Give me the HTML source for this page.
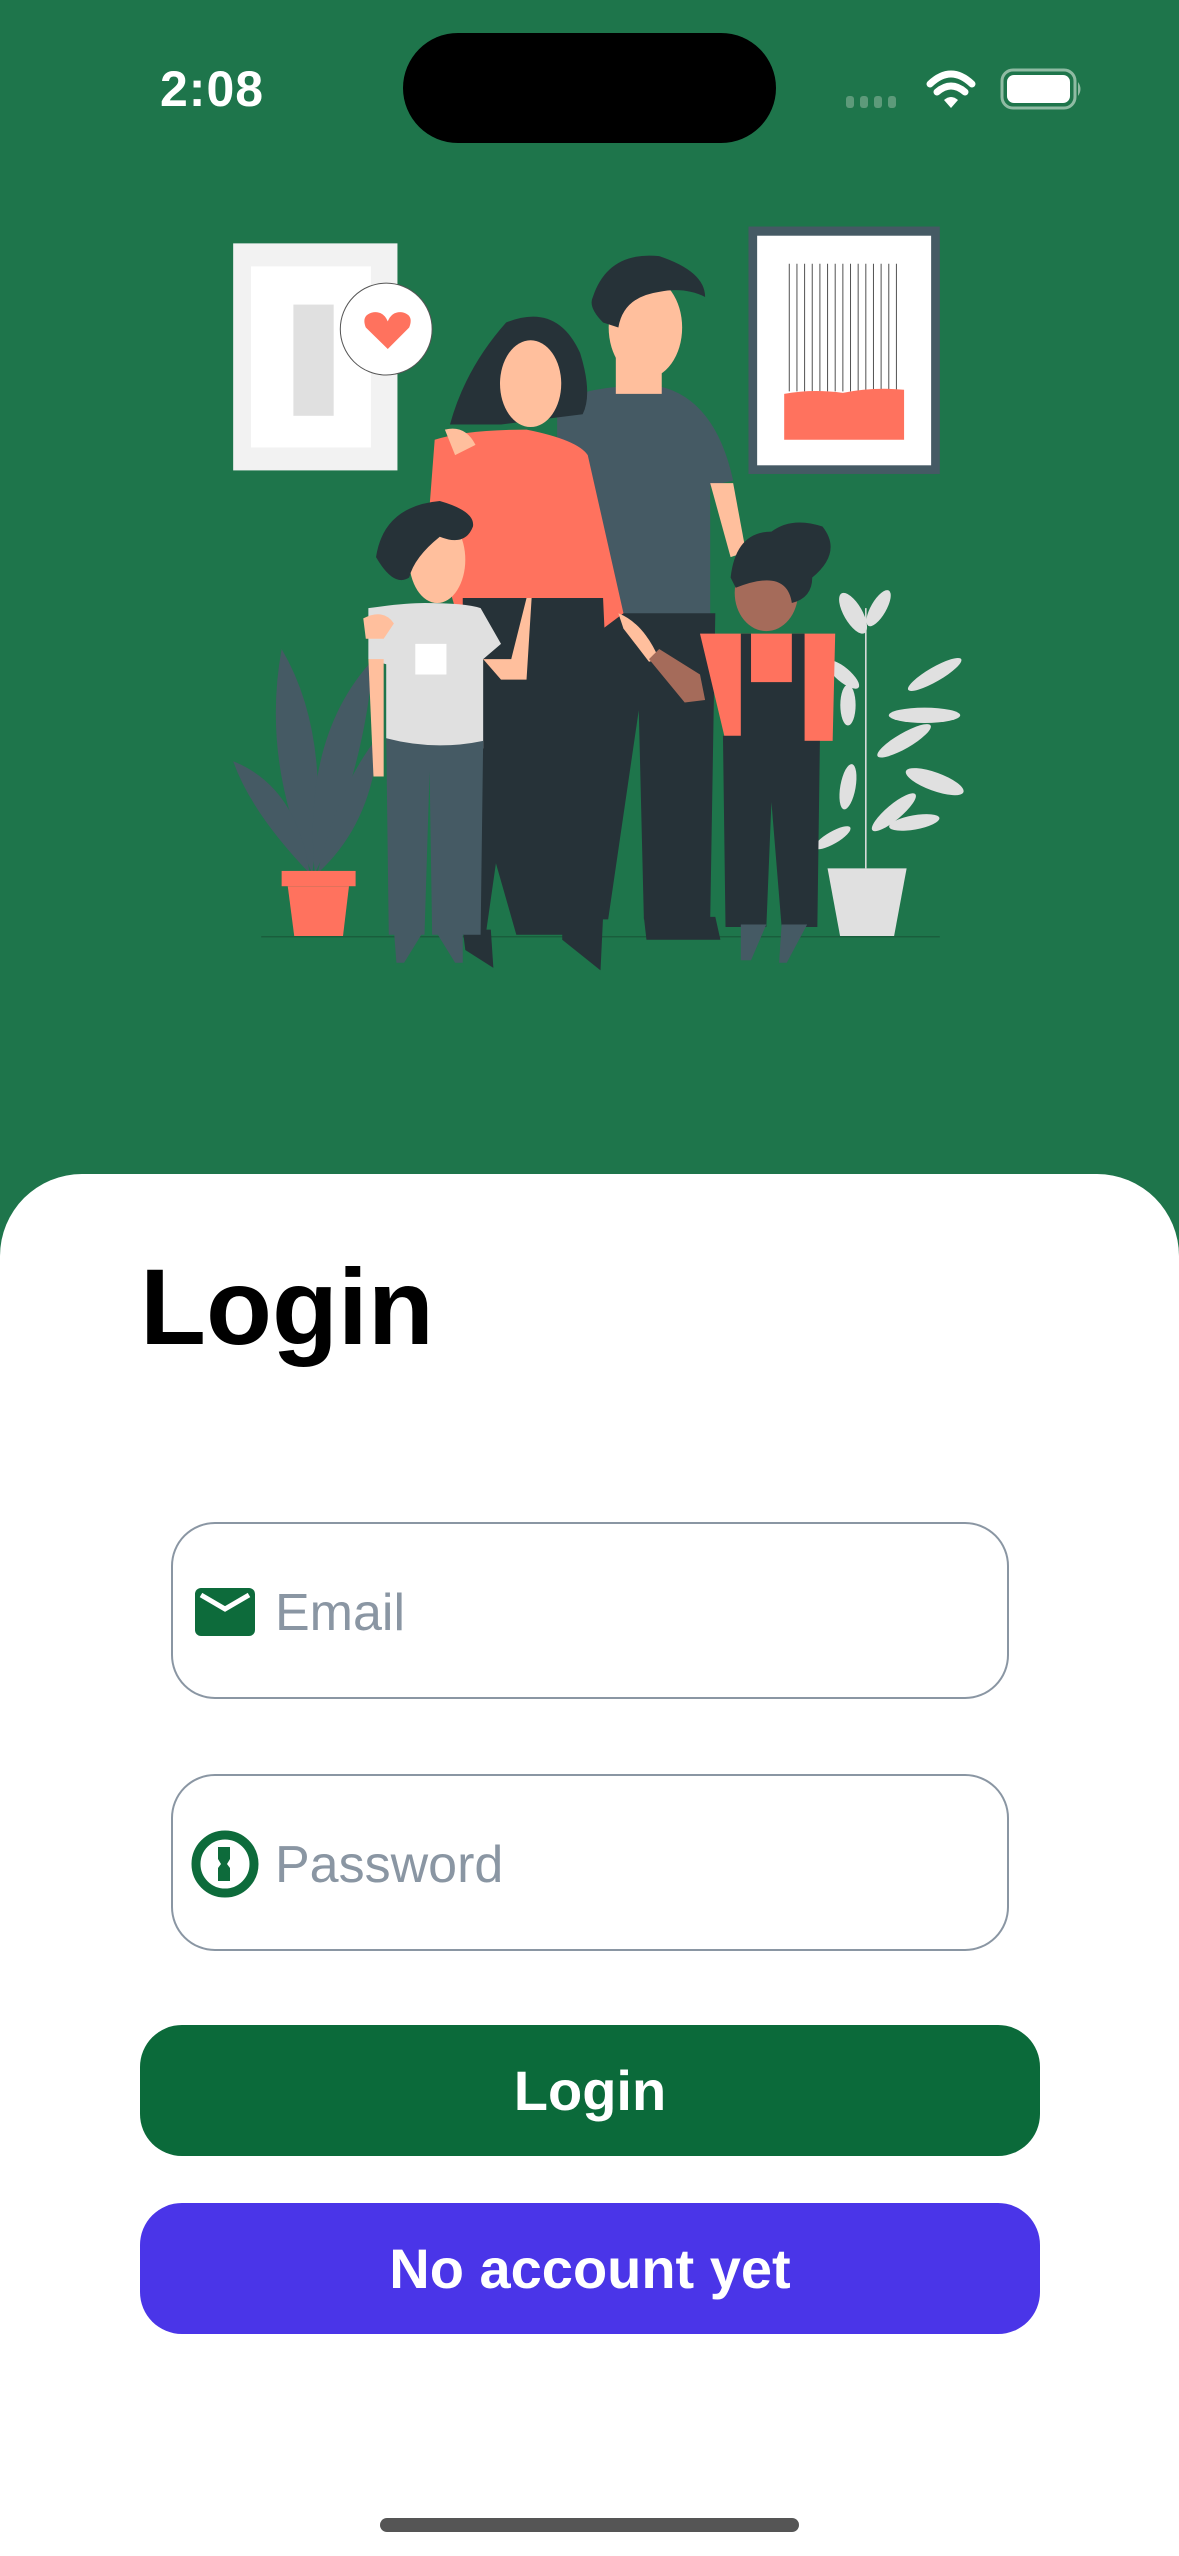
<!DOCTYPE html>
<html><head><meta charset="utf-8">
<style>
*{margin:0;padding:0;box-sizing:border-box}
html,body{width:1179px;height:2556px;overflow:hidden;background:#fff;font-family:"Liberation Sans",sans-serif}
.top{position:absolute;left:0;top:0;width:1179px;height:1260px;background:#1e754b}
.island{position:absolute;left:403px;top:33px;width:373px;height:110px;background:#000;border-radius:55px}
.time{position:absolute;left:160px;top:60px;font-size:50px;font-weight:bold;color:#fff;letter-spacing:1px}
.card{position:absolute;left:0;top:1174px;width:1179px;height:1382px;background:#fff;border-radius:82px 82px 0 0}
.title{position:absolute;left:140px;top:1242px;font-size:108px;font-weight:bold;color:#000;line-height:1.2}
.field{position:absolute;left:171px;width:838px;height:177px;border:2.5px solid #8a96a3;border-radius:44px}
.ph{position:absolute;left:102px;top:58px;font-size:52px;color:#8a96a3;line-height:1.2}
.btn{position:absolute;left:140px;width:900px;height:131px;border-radius:42px;color:#fff;font-weight:bold;font-size:56px;text-align:center;line-height:131px}
.home{position:absolute;left:380px;top:2518px;width:419px;height:14px;border-radius:7px;background:#555}
</style></head><body>
<div class="top"></div>
<div class="time">2:08</div>
<div class="island"></div>
<svg style="position:absolute;left:840px;top:60px" width="250" height="60" viewBox="0 0 250 60">
<g fill="#5d9a7a"><rect x="6" y="36" width="8" height="12" rx="3"/><rect x="20" y="36" width="8" height="12" rx="3"/><rect x="34" y="36" width="8" height="12" rx="3"/><rect x="48" y="36" width="8" height="12" rx="3"/></g>
<g fill="none" stroke="#fff" stroke-width="7" stroke-linecap="round"><path d="M90 24 Q111 4 132 24"/><path d="M97 32 Q111 20 125 32"/></g>
<path d="M104 40 L111 48 L118 40 Q111 34 104 40Z" fill="#fff"/>
<rect x="162" y="10" width="73" height="38" rx="11" fill="none" stroke="#8fbba3" stroke-width="3"/>
<rect x="167" y="15" width="63" height="28" rx="7" fill="#fff"/>
<path d="M238 22 Q243 29 238 36Z" fill="#8fbba3"/>
</svg>
<svg style="position:absolute;left:200px;top:200px" width="800" height="800" viewBox="0 0 1568 1568">
<!-- left frame -->
<rect x="65" y="85" width="322" height="445" fill="#f2f2f2"/>
<rect x="100" y="130" width="235" height="355" fill="#fff"/>
<rect x="183" y="205" width="79" height="218" fill="#e0e0e0"/>
<circle cx="365" cy="253" r="90" fill="#fff" stroke="#555" stroke-width="2"/>
<path d="M368 292 L325 250 Q315 225 340 220 Q360 218 368 238 Q376 218 396 220 Q420 225 410 250Z" fill="#ff725e"/>
<!-- right frame -->
<rect x="1075" y="52" width="375" height="485" fill="#455a64"/>
<rect x="1092" y="70" width="341" height="450" fill="#fff"/>
<g stroke="#555" stroke-width="2">
<path d="M1155 125V375M1170 125V375M1185 125V375M1200 125V375M1215 125V375M1230 125V375M1245 125V375M1260 125V375M1275 125V375M1290 125V375M1305 125V375M1320 125V375M1335 125V375M1350 125V375M1365 125V375"/></g>
<path d="M1145 380 Q1200 370 1260 378 Q1320 366 1380 372 V470 H1145Z" fill="#ff725e"/>
<!-- left plant -->
<g fill="#455a64">
<path d="M220 1320 Q120 1100 160 880 Q260 1050 220 1320Z"/>
<path d="M225 1320 Q200 1050 340 900 Q320 1130 225 1320Z"/>
<path d="M215 1320 Q100 1200 65 1100 Q190 1150 215 1320Z"/>
<path d="M230 1320 Q270 1150 350 1050 Q340 1220 230 1320Z"/>
</g>
<rect x="160" y="1315" width="145" height="30" fill="#ff725e"/>
<path d="M172 1345 H292 L280 1445 H185Z" fill="#ff725e"/>
<!-- right plant -->
<g fill="#e0e0e0">
<path d="M1305 1310 V800" stroke="#e0e0e0" stroke-width="3"/>
<ellipse cx="1280" cy="810" rx="18" ry="45" transform="rotate(-30 1280 810)"/>
<ellipse cx="1330" cy="800" rx="15" ry="40" transform="rotate(30 1330 800)"/>
<ellipse cx="1440" cy="930" rx="60" ry="14" transform="rotate(-30 1440 930)"/>
<ellipse cx="1420" cy="1010" rx="70" ry="15"/>
<ellipse cx="1440" cy="1140" rx="60" ry="18" transform="rotate(20 1440 1140)"/>
<ellipse cx="1260" cy="930" rx="40" ry="14" transform="rotate(40 1260 930)"/>
<ellipse cx="1270" cy="990" rx="15" ry="40"/>
<ellipse cx="1380" cy="1060" rx="60" ry="15" transform="rotate(-30 1380 1060)"/>
<ellipse cx="1270" cy="1150" rx="15" ry="45" transform="rotate(10 1270 1150)"/>
<ellipse cx="1360" cy="1200" rx="55" ry="15" transform="rotate(-40 1360 1200)"/>
<ellipse cx="1240" cy="1250" rx="40" ry="12" transform="rotate(-30 1240 1250)"/>
<ellipse cx="1400" cy="1220" rx="50" ry="14" transform="rotate(-10 1400 1220)"/>
</g>
<path d="M1230 1310 H1385 L1360 1445 H1255Z" fill="#e0e0e0"/>
<line x1="120" y1="1444" x2="1450" y2="1444" stroke="#195e3c" stroke-width="3"/>
<!-- man -->
<path d="M700 400 Q760 360 900 365 Q1010 390 1045 550 L1000 560 V820 H700Z" fill="#455a64"/>
<path d="M1000 555 H1045 L1070 690 L1040 700Z" fill="#ffbf9d"/>
<path d="M700 810 H1010 L1000 1410 H870 L860 1000 L800 1410 H700Z" fill="#263238"/>
<rect x="815" y="300" width="90" height="80" fill="#ffbf9d"/>
<ellipse cx="873" cy="250" rx="72" ry="100" fill="#ffbf9d"/>
<path d="M770 190 Q800 100 900 110 Q990 140 990 190 Q950 170 900 180 Q830 190 820 250 L790 240 Q760 210 770 190Z" fill="#263238"/>
<path d="M870 1405 H1010 L1020 1450 H875Z M710 1405 H790 L785 1510 L710 1450Z" fill="#263238"/>
<!-- woman -->
<path d="M490 440 Q520 330 600 240 Q700 200 745 300 Q770 380 750 420 L590 440Z" fill="#263238"/>
<path d="M460 470 Q520 450 640 450 Q740 470 760 500 L830 810 L790 840 L770 800 H500 Q470 700 450 600Z" fill="#ff725e"/>
<path d="M515 780 H790 L800 1000 L720 1440 H620 L580 1300 L560 1440 H515Z" fill="#263238"/>
<ellipse cx="648" cy="360" rx="60" ry="85" fill="#ffbf9d"/>
<path d="M820 810 Q870 830 900 900 L880 905 L830 840Z" fill="#ffbf9d"/>
<path d="M480 450 Q520 440 540 480 L500 500Z" fill="#ffbf9d"/>
<path d="M515 1430 H570 L575 1505 L520 1470Z" fill="#263238"/>
<!-- girl -->
<path d="M980 850 H1245 L1240 1060 H1030Z" fill="#ff725e"/>
<path d="M1060 850 H1080 V945 H1160 V850 H1185 V1060 H1215 L1210 1425 H1140 L1120 1180 L1110 1425 H1030 L1025 1050 H1060Z" fill="#263238"/>
<path d="M900 880 L980 930 L990 980 L950 985 L880 900Z" fill="#a56b5a"/>
<ellipse cx="1110" cy="770" rx="62" ry="75" fill="#a56b5a"/>
<path d="M1040 740 Q1050 650 1120 650 Q1160 620 1220 640 Q1260 690 1200 740 Q1200 780 1160 790 Q1150 720 1050 760Z" fill="#263238"/>
<path d="M1060 1420 H1110 L1080 1490 H1060Z M1140 1420 H1190 L1150 1495 H1135Z" fill="#455a64"/>
<!-- boy -->
<path d="M330 800 Q400 790 440 790 Q520 790 550 800 L590 870 L555 900 L555 1075 Q460 1090 365 1055 L365 910 L330 900Z" fill="#e0e0e0"/>
<rect x="422" y="870" width="61" height="60" fill="#fff"/>
<path d="M365 1055 Q460 1080 555 1060 L550 1440 H455 L450 1120 L440 1440 H370Z" fill="#455a64"/>
<ellipse cx="465" cy="705" rx="55" ry="85" fill="#ffbf9d"/>
<path d="M345 700 Q360 600 470 590 Q540 610 535 640 Q520 680 470 660 Q420 700 410 740 Q380 760 345 700Z" fill="#263238"/>
<path d="M555 900 L610 900 L640 780 L650 780 L640 940 L590 940Z" fill="#ffbf9d"/>
<path d="M330 900 H360 V1130 H340Z" fill="#ffbf9d"/>
<path d="M320 820 Q360 800 380 830 L360 860 L325 860Z" fill="#ffbf9d"/>
<path d="M380 1430 H440 L400 1495 H385Z M460 1430 H515 L515 1495 H500Z" fill="#455a64"/>
</svg>
<div class="card"></div>
<div class="title">Login</div>
<div class="field" style="top:1522px">
<svg style="position:absolute;left:21px;top:63px" width="62" height="50" viewBox="0 0 62 50"><rect x="1" y="1" width="60" height="48" rx="6" fill="#0d6b3b"/><path d="M7 8 L31 22 L55 8" fill="none" stroke="#fff" stroke-width="5"/></svg>
<div class="ph">Email</div></div>
<div class="field" style="top:1774px">
<svg style="position:absolute;left:18px;top:54px" width="68" height="68" viewBox="0 0 68 68"><circle cx="34" cy="34" r="29" fill="none" stroke="#0d6b3b" stroke-width="9"/><path d="M27 17 H39 V29 L36 34 L39 38 V51 H27 V38 L30 34 L27 29Z" fill="#0d6b3b"/></svg>
<div class="ph">Password</div></div>
<div class="btn" style="top:2025px;background:#0b6a3a">Login</div>
<div class="btn" style="top:2203px;background:#4a35e8">No account yet</div>
<div class="home"></div>
</body></html>
